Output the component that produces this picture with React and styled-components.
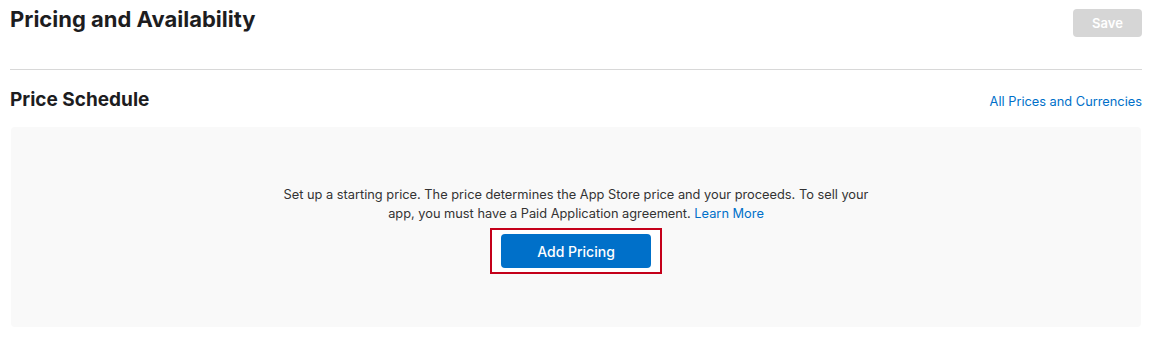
import React from "react";
import styled, { createGlobalStyle } from "styled-components";

const GlobalStyle = createGlobalStyle`
  html, body {
    margin: 0;
    padding: 0;
    background: #ffffff;
  }
  body {
    font-family: Inter, "Noto Sans", "Liberation Sans", sans-serif;
    color: #1d1d1f;
  }
`;

const Page = styled.div`
  width: 1155px;
  box-sizing: border-box;
  padding: 0 13px 0 10px;
`;

const HeaderRow = styled.div`
  display: flex;
  justify-content: space-between;
  align-items: flex-start;
  height: 69px;
  border-bottom: 1px solid #d8d8d8;
`;

const Title = styled.h1`
  margin: 4px 0 0;
  font-size: 22px;
  line-height: 30px;
  font-weight: 700;
  color: #1d1d1f;
`;

const SaveButton = styled.button`
  margin-top: 9px;
  width: 69px;
  height: 28px;
  border: none;
  border-radius: 4px;
  background: #d6d6d6;
  color: #ffffff;
  font-family: inherit;
  font-size: 13px;
  font-weight: 600;
  cursor: default;
`;

const SectionHeader = styled.div`
  display: flex;
  justify-content: space-between;
  align-items: baseline;
  margin-top: 17px;
  height: 40px;
`;

const SectionTitle = styled.h2`
  margin: 0;
  font-size: 19px;
  line-height: 26px;
  font-weight: 700;
  color: #1d1d1f;
`;

const Link = styled.a`
  color: #0070c9;
  font-size: 12.8px;
  text-decoration: none;
  cursor: pointer;
`;

const Panel = styled.div`
  margin: 0 1px;
  height: 200px;
  box-sizing: border-box;
  padding-top: 58px;
  background: #f9f9f9;
  border-radius: 4px;
  display: flex;
  flex-direction: column;
  align-items: center;
`;

const Message = styled.p`
  margin: 0;
  max-width: 600px;
  text-align: center;
  font-size: 12.8px;
  line-height: 19px;
  color: #333333;
`;

const Highlight = styled.div`
  margin-top: 5px;
  padding: 4px 9px;
  border: 2px solid #c4001a;
  box-shadow: inset 0 0 0 1px #ffffff;
  background: #ffffff;
  display: flex;
`;

const PrimaryButton = styled.button`
  width: 150px;
  height: 34px;
  border: none;
  border-radius: 4px;
  background: #0070c9;
  color: #ffffff;
  font-family: inherit;
  font-size: 14px;
  font-weight: 500;
  cursor: pointer;
`;

export default function App() {
  return (
    <>
      <GlobalStyle />
      <Page>
        <HeaderRow>
          <Title>Pricing and Availability</Title>
          <SaveButton disabled>Save</SaveButton>
        </HeaderRow>
        <SectionHeader>
          <SectionTitle>Price Schedule</SectionTitle>
          <Link>All Prices and Currencies</Link>
        </SectionHeader>
        <Panel>
          <Message>
            Set up a starting price. The price determines the App Store price and your proceeds. To sell your
            app, you must have a Paid Application agreement. <Link>Learn More</Link>
          </Message>
          <Highlight>
            <PrimaryButton>Add Pricing</PrimaryButton>
          </Highlight>
        </Panel>
      </Page>
    </>
  );
}
